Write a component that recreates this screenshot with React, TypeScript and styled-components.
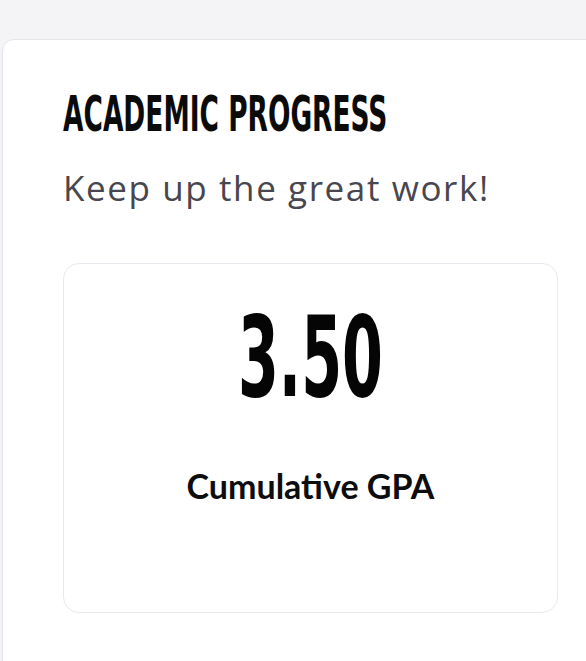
import React from "react";
import styled, { createGlobalStyle } from "styled-components";

const Global = createGlobalStyle`
  html, body {
    margin: 0;
    padding: 0;
    overflow: hidden;
    background: #f4f4f6;
  }
  body {
    font-family: "Lato", "Liberation Sans", sans-serif;
  }
`;

const Page = styled.div`
  width: 586px;
  height: 661px;
  overflow: hidden;
  padding: 39px 0 0 2px;
  box-sizing: border-box;
`;

const Card = styled.section`
  width: 620px;
  min-height: 700px;
  box-sizing: border-box;
  background: #ffffff;
  border: 1px solid #e6e3ea;
  border-radius: 12px;
  padding: 47px 60px 0 60px;
`;

const Title = styled.h2`
  margin: 0;
  height: 56px;
  line-height: 56px;
  font-family: "DejaVu Sans Condensed", "Liberation Sans", sans-serif;
  font-weight: 700;
  font-size: 49px;
  color: #0b0b0b;
  white-space: nowrap;
`;

const Squeeze = styled.span<{ $scale: number; $origin?: string }>`
  display: inline-block;
  transform: scaleX(${(p) => p.$scale});
  transform-origin: ${(p) => p.$origin ?? "left center"};
`;

const Subtitle = styled.p`
  margin: 23px 0 0 0;
  line-height: 44px;
  font-family: "Open Sans", "Lato", sans-serif;
  font-size: 35px;
  font-weight: 400;
  letter-spacing: 1.6px;
  color: #48464e;
  white-space: nowrap;
`;

const StatBox = styled.div`
  margin-top: 53px;
  width: 495px;
  box-sizing: border-box;
  border: 1px solid #ebe7ef;
  border-radius: 16px;
  background: #ffffff;
  padding: 37px 0 106px 0;
  display: flex;
  flex-direction: column;
  align-items: center;
`;

const StatValue = styled.div`
  line-height: 113px;
  height: 113px;
  font-family: "DejaVu Sans Condensed", "Liberation Sans", sans-serif;
  font-weight: 700;
  font-size: 113px;
  color: #050505;
`;

const StatLabel = styled.div`
  margin-top: 52px;
  line-height: 40px;
  font-family: "Lato", sans-serif;
  font-weight: 700;
  font-size: 34px;
  color: #0d0d0f;
`;

export default function App() {
  return (
    <>
      <Global />
      <Page>
        <Card>
          <Title>
            <Squeeze $scale={0.6}>ACADEMIC PROGRESS</Squeeze>
          </Title>
          <Subtitle>Keep up the great work!</Subtitle>
          <StatBox>
            <StatValue>
              <Squeeze $scale={0.578} $origin="center center">3.50</Squeeze>
            </StatValue>
            <StatLabel>Cumulative GPA</StatLabel>
          </StatBox>
        </Card>
      </Page>
    </>
  );
}
